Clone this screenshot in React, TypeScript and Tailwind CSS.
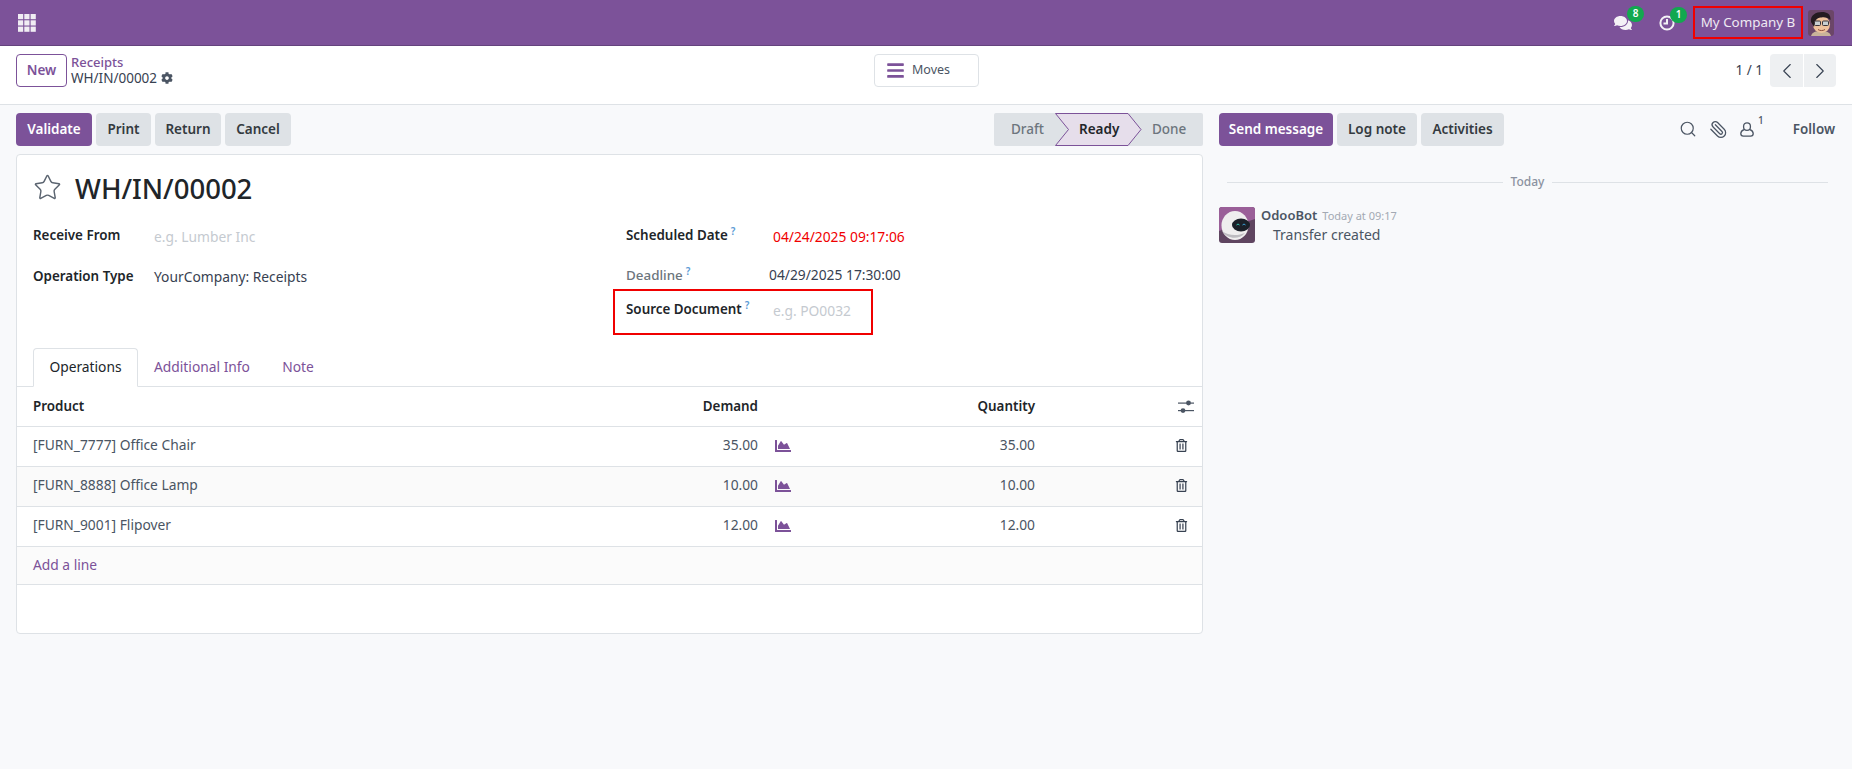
import React from 'react';
import { ChevronLeft, ChevronRight, Paperclip, Search, Star } from 'lucide-react';
import { FaBars, FaChartArea, FaCog, FaComments, FaRegTrashAlt } from 'react-icons/fa';

const lines = [
  { name: '[FURN_7777] Office Chair', demand: '35.00', bg: 'bg-white' },
  { name: '[FURN_8888] Office Lamp', demand: '10.00', bg: 'bg-[#fafafa]' },
  { name: '[FURN_9001] Flipover', demand: '12.00', bg: 'bg-white' },
];

function AppsIcon() {
  const cells = [0, 6.3, 12.6];
  return (
    <svg width="18" height="18" viewBox="0 0 18 18" fill="#f0edf3">
      {cells.map((y) => cells.map((x) => <rect key={`${x}-${y}`} x={x} y={y} width="5.2" height="5.2" />))}
    </svg>
  );
}

function ClockIcon() {
  return (
    <svg width="16" height="16" viewBox="0 0 16 16" fill="none" stroke="#f4f1f6" strokeWidth="2">
      <circle cx="8" cy="8" r="6.6" />
      <path d="M8 4v4.6H4.5" />
    </svg>
  );
}

function SlidersIcon() {
  return (
    <svg width="16" height="14" viewBox="0 0 16 14" fill="#4b5563">
      <rect x="0" y="2.5" width="16" height="1.2" />
      <rect x="0" y="10" width="16" height="1.2" />
      <circle cx="10.5" cy="3" r="2.4" />
      <circle cx="5" cy="10.6" r="2.4" />
    </svg>
  );
}

function FollowerIcon() {
  return (
    <svg width="14" height="15" viewBox="0 0 14 15" fill="none" stroke="#4b5563" strokeWidth="1.3">
      <rect x="3.6" y="0.8" width="6.8" height="7.6" rx="3.4" />
      <path d="M4 7.6C2 8.4.8 9.6.8 11.6c0 1.7 1 2.6 2.6 2.6h7.2c1.6 0 2.6-.9 2.6-2.6 0-2-1.2-3.2-3.2-4" />
    </svg>
  );
}

function UserAvatar() {
  return (
    <svg width="26" height="26" viewBox="0 0 26 26" className="rounded-[3px]">
      <rect width="26" height="26" fill="#6b4668" />
      <path d="M3 26c1-4 5-5 10-5s9 1 10 5z" fill="#c9b39a" />
      <ellipse cx="13.5" cy="14.5" rx="8.5" ry="8.5" fill="#efc29c" />
      <path d="M3 12C2 5 8 2 14 2c5 0 9 2 8.500 8-3-2.500-6-3-9-2.500-3 .2-5 1-6.500 4.500L6 17z" fill="#241b20" />
      <rect x="6.500" y="11" width="6" height="4.500" rx="1" fill="#c9d0d2" stroke="#3a3438" strokeWidth="1" />
      <rect x="14.500" y="11" width="6" height="4.500" rx="1" fill="#c9d0d2" stroke="#3a3438" strokeWidth="1" />
      <path d="M10 19.500c2 1.400 5 1.400 7 0" fill="none" stroke="#8a4a3a" strokeWidth="1" />
    </svg>
  );
}

function BotAvatar() {
  return (
    <svg width="36" height="36" viewBox="0 0 36 36" className="rounded-[3px]">
      <rect width="36" height="36" fill="#5f4560" />
      <path d="M0 0h36v12L0 24z" fill="#9a5f98" />
      <ellipse cx="16" cy="18.500" rx="13.500" ry="14.500" fill="#efeeee" />
      <path d="M3 24c4 7 16 10 23 2-7 3-17 3-23-2z" fill="#bdbcc0" />
      <ellipse cx="22" cy="18" rx="9" ry="6.500" fill="#1b2029" />
      <path d="M17.500 18q1.500-2 3 0" fill="none" stroke="#35c6b0" strokeWidth="1" />
      <path d="M23.500 18q1.500-2 3 0" fill="none" stroke="#3aa0d8" strokeWidth="1" />
    </svg>
  );
}

function GreyButton({ children, width }: { children: React.ReactNode; width: string }) {
  return (
    <button className={`h-[33px] ${width} rounded-[4px] bg-[#dee2e6] text-[13.5px] font-semibold text-[#343a40]`}>
      {children}
    </button>
  );
}

function Help() {
  return <sup className="ml-[3px] text-[10px] font-semibold text-[#5b9bd5]">?</sup>;
}

export default function App() {
  return (
    <div className="flex h-[769px] w-[1852px] flex-col overflow-hidden bg-[#f8f9fb] font-['Noto_Sans',sans-serif] text-[13.8px] text-[#212529]">
      {/* top bar */}
      <header className="flex h-[46px] shrink-0 items-center border-b border-[#64437d] bg-[#7c5299] pl-[18px] pr-[18px]">
        <AppsIcon />
        <div className="ml-auto flex items-center">
          <div className="relative mr-[27px] text-[#f4f1f6]">
            <FaComments size={18} />
            <span className="absolute -right-[12px] -top-[8px] flex h-[16px] w-[17px] items-center justify-center rounded-full bg-[#12a84f] text-[10px] font-semibold text-white">8</span>
          </div>
          <div className="relative mr-[18px]">
            <ClockIcon />
            <span className="absolute -right-[12px] -top-[8px] flex h-[16px] w-[17px] items-center justify-center rounded-full bg-[#12a84f] text-[10px] font-semibold text-white">1</span>
          </div>
          <div className="mr-[5px] flex h-[33px] w-[110px] items-center justify-center border-2 border-[#f00000] text-[13.4px] text-[#efeaf3]">
            My Company B
          </div>
          <UserAvatar />
        </div>
      </header>

      {/* control panel */}
      <div className="flex h-[59px] shrink-0 items-start border-b border-[#dee2e6] bg-white pl-[16px] pr-[16px] pt-[8px]">
        <div className="flex w-[858px] items-center">
          <button className="h-[33px] w-[51px] rounded-[4px] border border-[#7c5299] text-[13.5px] font-semibold text-[#7c5299]">New</button>
          <div className="-mt-[2px] ml-[4px] leading-[16px]">
            <div className="text-[13px] font-medium text-[#7c5299]">Receipts</div>
            <div className="flex items-center gap-[4px] text-[13.5px] text-[#374151]">
              WH/IN/00002 <FaCog size={12} className="text-[#4b5563]" />
            </div>
          </div>
        </div>
        <button className="flex h-[33px] w-[105px] items-center gap-[7px] rounded-[4px] border border-[#dee2e6] pl-[11px] text-[12.5px] text-[#4b5563]">
          <FaBars size={19} className="text-[#7c5299]" /> Moves
        </button>
        <div className="ml-auto flex items-center">
          <span className="mr-[7px] text-[13.5px] text-[#374151]">1 / 1</span>
          <button className="flex h-[33px] w-[33px] items-center justify-center rounded-l-[4px] bg-[#eef0f2] text-[#374151]">
            <ChevronLeft size={26} strokeWidth={1} />
          </button>
          <button className="ml-px flex h-[33px] w-[32px] items-center justify-center rounded-r-[4px] bg-[#eef0f2] text-[#374151]">
            <ChevronRight size={26} strokeWidth={1} />
          </button>
        </div>
      </div>

      <div className="flex flex-1">
        {/* form column */}
        <main className="ml-[16px] w-[1187px] shrink-0 pt-[8px]">
          <div className="flex h-[33px] items-center justify-between">
            <div className="flex gap-[4px]">
              <button className="h-[33px] w-[76px] rounded-[4px] bg-[#7c5299] text-[13.5px] font-semibold text-white">Validate</button>
              <GreyButton width="w-[55px]">Print</GreyButton>
              <GreyButton width="w-[66px]">Return</GreyButton>
              <GreyButton width="w-[66px]">Cancel</GreyButton>
            </div>
            <div className="flex h-[33px] w-[209px] items-center rounded-[2px] bg-[#dee2e6] text-[13.5px] font-medium text-[#6c757d]">
              <span className="w-[61px] pl-[17px]">Draft</span>
              <div className="relative flex h-[33px] w-[87px] items-center">
                <svg className="absolute inset-0" width="87" height="33" viewBox="0 0 87 33">
                  <polygon points="0.5,0.5 73,0.5 86,16.5 73,32.5 0.5,32.5 13.5,16.5" fill="#e6deeb" stroke="#7c5299" />
                </svg>
                <span className="relative pl-[24px] font-semibold text-[#212529]">Ready</span>
              </div>
              <span className="pl-[10px]">Done</span>
            </div>
          </div>

          <div className="mt-[8px] h-[480px] rounded-[4px] border border-[#dee2e6] bg-white">
            <div className="flex h-[54px] items-center pl-[16px] pt-[13px]">
              <Star size={29} strokeWidth={1.2} className="-mt-[2px] text-[#5b6470]" />
              <h1 className="ml-[13px] text-[27.5px] font-medium leading-none text-[#212529]">WH/IN/00002</h1>
            </div>

            <div className="mt-[10px] flex h-[129px] pl-[16px]">
              <div className="w-[593px]">
                <div className="flex h-[34px] items-center">
                  <span className="-mt-[1px] w-[121px] text-[13.4px] font-semibold">Receive From</span>
                  <span className="mt-[3px] text-[#c5cad0]">e.g. Lumber Inc</span>
                </div>
                <div className="mt-[6px] flex h-[34px] items-center">
                  <span className="w-[121px] text-[13.4px] font-semibold">Operation Type</span>
                  <span className="mt-[2px] text-[#374151]">YourCompany: Receipts</span>
                </div>
              </div>
              <div className="relative">
                <div className="flex h-[34px] items-center">
                  <span className="-mt-[1px] w-[147px] text-[13.4px] font-semibold">Scheduled Date<Help /></span>
                  <span className="mt-[3px] text-[#f00000]">04/24/2025 09:17:06</span>
                </div>
                <div className="mt-[5px] flex h-[34px] items-center">
                  <span className="w-[143px] text-[13.4px] font-medium text-[#6c757d]">Deadline<Help /></span>
                  <span className="text-[#374151]">04/29/2025 17:30:00</span>
                </div>
                <div className="flex h-[34px] items-center">
                  <span className="w-[147px] text-[13.4px] font-semibold">Source Document<Help /></span>
                  <span className="mt-[5px] text-[#c5cad0]">e.g. PO0032</span>
                </div>
                <div className="absolute -left-[13px] top-[70px] h-[46px] w-[260px] border-2 border-[#f00000]" />
              </div>
            </div>

            {/* tabs */}
            <div className="flex h-[39px] items-end border-b border-[#dee2e6] pl-[16px]">
              <div className="-mb-px flex h-[39px] w-[105px] items-center justify-center rounded-t-[4px] border border-[#dee2e6] border-b-white text-[#212529]">Operations</div>
              <div className="flex h-[38px] w-[128px] items-center justify-center text-[#7c5299]">Additional Info</div>
              <div className="flex h-[38px] w-[64px] items-center justify-center text-[#7c5299]">Note</div>
            </div>

            {/* move lines */}
            <div className="flex h-[40px] items-center border-b border-[#dee2e6] pl-[16px] text-[13.4px] font-semibold">
              <span className="w-[600px]">Product</span>
              <span className="w-[125px] text-right">Demand</span>
              <span className="w-[277px] text-right">Quantity</span>
              <span className="ml-[143px]"><SlidersIcon /></span>
            </div>
            {lines.map((line) => (
              <div key={line.name} className={`flex h-[40px] items-center border-b border-[#dee2e6] pb-[2px] pl-[16px] text-[#4a5563] ${line.bg}`}>
                <span className="w-[600px]">{line.name}</span>
                <span className="w-[125px] text-right">{line.demand}</span>
                <div className="flex w-[277px] items-center justify-between pl-[17px]">
                  <FaChartArea size={16} className="text-[#7c5299]" />
                  <span>{line.demand}</span>
                </div>
                <span className="ml-[140px] text-[#374151]"><FaRegTrashAlt size={13} /></span>
              </div>
            ))}
            <div className="flex h-[38px] items-center border-b border-[#dee2e6] bg-[#fbfbfb] pl-[16px] text-[#7c5299]">Add a line</div>
          </div>
        </main>

        {/* chatter */}
        <aside className="ml-[16px] w-[617px] shrink-0 pt-[8px]">
          <div className="flex h-[33px] items-center">
            <div className="flex gap-[4px]">
              <button className="h-[33px] w-[114px] rounded-[4px] bg-[#7c5299] text-[13.5px] font-semibold text-white">Send message</button>
              <GreyButton width="w-[80px]">Log note</GreyButton>
              <GreyButton width="w-[83px]">Activities</GreyButton>
            </div>
            <div className="ml-auto flex items-center pr-[1px] text-[#4b5563]">
              <Search size={18} strokeWidth={1.6} />
              <Paperclip size={19} strokeWidth={1.6} className="ml-[12px] -scale-x-100" />
              <span className="ml-[12px]"><FollowerIcon /></span>
              <sup className="-mt-[8px] ml-[4px] text-[10px] font-medium">1</sup>
              <span className="ml-[29px] text-[13.4px] font-semibold">Follow</span>
            </div>
          </div>
          <div className="mt-[27px] flex items-center pl-[8px] pr-[8px]">
            <div className="h-px flex-1 bg-[#dee2e6]" />
            <span className="px-[8px] text-[12px] font-medium text-[#8b92a0]">Today</span>
            <div className="h-px flex-1 bg-[#dee2e6]" />
          </div>
          <div className="mt-[16px] flex">
            <BotAvatar />
            <div className="ml-[6px]">
              <div className="flex items-baseline gap-[5px] leading-[16px]">
                <span className="text-[13px] font-semibold text-[#4b5563]">OdooBot</span>
                <span className="text-[11px] text-[#a3a9b3]">Today at 09:17</span>
              </div>
              <div className="ml-[12px] text-[14px] text-[#4a5563]">Transfer created</div>
            </div>
          </div>
        </aside>
      </div>
    </div>
  );
}
